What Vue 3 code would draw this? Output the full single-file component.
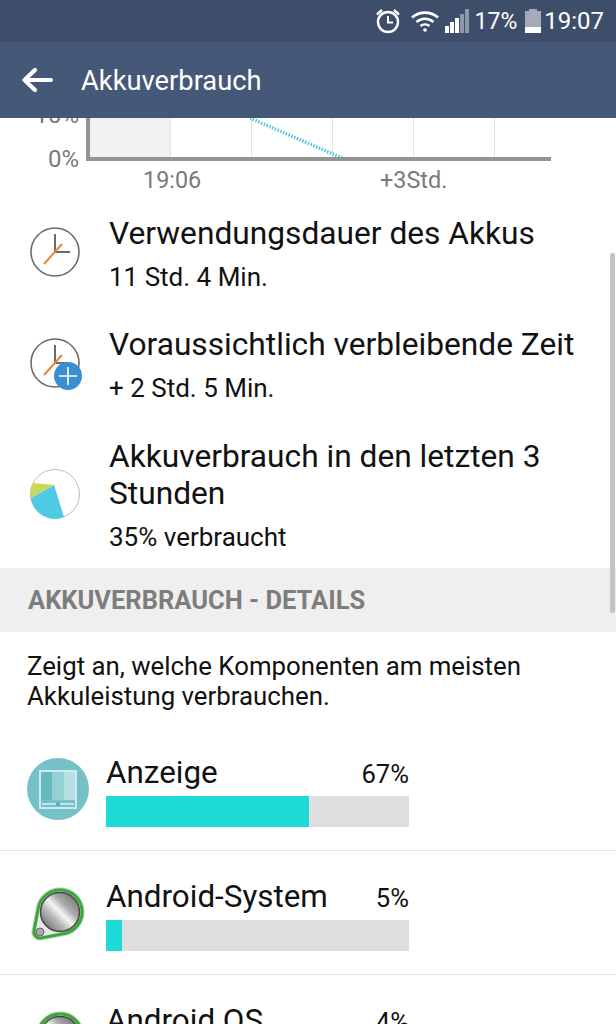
<template>
  <div class="phone">
    <div class="status">
      <svg class="ic-alarm" width="28" height="28" viewBox="0 0 28 28" fill="none" stroke="#fff">
        <circle cx="14" cy="15" r="10" stroke-width="2.4" />
        <path d="M14 9v6.500h5" stroke-width="2" />
        <path d="M3 7.500 8 3M25 7.500 20 3" stroke-width="2.400" />
      </svg>
      <svg class="ic-wifi" width="30" height="24" viewBox="0 0 30 24" fill="none" stroke="#fff" stroke-width="2.6">
        <path d="M2 8.500c7.500-6.500 18.500-6.500 26 0" />
        <path d="M6.500 13c5-4.300 12-4.300 17 0" />
        <path d="M10.500 17c2.600-2 6.400-2 9 0" />
        <circle cx="15" cy="21" r="1.800" fill="#fff" stroke="none" />
      </svg>
      <div class="signal">
        <i v-for="b in signal" :key="b.h" :class="{ off: b.off }" :style="{ height: b.h + 'px' }"></i>
      </div>
      <span class="pct">17%</span>
      <div class="batt"><div class="batt-level"></div></div>
      <span class="clock">19:07</span>
    </div>

    <div class="appbar">
      <svg width="34" height="30" viewBox="0 0 34 30" fill="none" stroke="#fff" stroke-width="4.200" stroke-linecap="round" stroke-linejoin="round">
        <path d="M31 15H5M15 5 4.500 15 15 25" />
      </svg>
      <span class="title">Akkuverbrauch</span>
    </div>

    <div class="chart-area">
      <span class="y top">10%</span>
      <span class="y zero">0%</span>
      <div class="plot">
        <div class="cell now"></div>
        <div v-for="n in 5" :key="n" class="cell"></div>
        <svg class="dots" width="110" height="42" viewBox="0 0 110 42">
          <path d="M0 0 92 40" stroke="#52c6da" stroke-width="3.500" stroke-dasharray="1.500 1.500" />
        </svg>
      </div>
      <div class="xlabels">
        <span>19:06</span>
        <span>+3Std.</span>
      </div>
    </div>

    <div class="info">
      <svg class="info-icon" width="54" height="54" viewBox="0 0 54 54">
        <circle cx="27" cy="27" r="24" fill="#fff" stroke="#6b6b6b" stroke-width="1.600" />
        <path d="M27 9v18h15" fill="none" stroke="#6a6a6a" stroke-width="2" />
        <path d="M16 39 34 19" fill="none" stroke="#e0883f" stroke-width="2" />
      </svg>
      <div class="info-text">
        <div class="info-title">Verwendungsdauer des Akkus</div>
        <div class="info-sub">11 Std. 4 Min.</div>
      </div>
    </div>
    <div class="info">
      <svg class="info-icon" width="54" height="54" viewBox="0 0 54 54">
        <circle cx="27" cy="27" r="24" fill="#fff" stroke="#6b6b6b" stroke-width="1.600" />
        <path d="M27 9v18h15" fill="none" stroke="#6a6a6a" stroke-width="2" />
        <path d="M16 39 34 19" fill="none" stroke="#e0883f" stroke-width="2" />
        <circle cx="40" cy="40" r="14" fill="#3a8fd3" />
        <path d="M40 31v18M31 40h18" stroke="#fff" stroke-width="1.600" />
      </svg>
      <div class="info-text">
        <div class="info-title">Voraussichtlich verbleibende Zeit</div>
        <div class="info-sub">+ 2 Std. 5 Min.</div>
      </div>
    </div>
    <div class="info info-last">
      <svg class="info-icon" width="54" height="54" viewBox="0 0 54 54">
        <circle cx="27" cy="27" r="24.500" fill="#fff" stroke="#bdbdbd" stroke-width="1" />
        <path d="M26 18 36 50A24.500 24.500 0 0 1 2.700 31Z" fill="#4fcbe6" />
        <path d="M26 18 2.700 31A24.500 24.500 0 0 1 5 16Z" fill="#c9d85a" />
      </svg>
      <div class="info-text">
        <div class="info-title">Akkuverbrauch in den letzten 3 Stunden</div>
        <div class="info-sub">35% verbraucht</div>
      </div>
    </div>

    <div class="section">AKKUVERBRAUCH - DETAILS</div>
    <p class="desc">Zeigt an, welche Komponenten am meisten Akkuleistung verbrauchen.</p>

    <div v-for="row in rows" :key="row.name" class="row">
      <svg v-if="row.kind === 'screen'" class="row-icon" width="62" height="62" viewBox="0 0 62 62">
        <circle cx="31" cy="31" r="31" fill="#74c2c8" />
        <rect x="13" y="13" width="36" height="37" fill="none" stroke="#d9f0f0" stroke-width="1.800" />
        <rect x="14" y="14" width="11" height="28" fill="#67b9c0" />
        <rect x="25" y="14" width="12" height="28" fill="#95d0d4" />
        <rect x="37" y="14" width="11" height="28" fill="#b6e0e2" />
        <path d="M15 46h32" stroke="#e4f5f5" stroke-width="1.400" />
        <circle cx="31" cy="46" r="2" fill="#5aa7ae" />
      </svg>
      <svg v-else class="row-icon" width="62" height="62" viewBox="0 0 62 62">
        <defs>
          <linearGradient :id="'metal' + row.fill" x1="0.1" y1="0.9" x2="0.9" y2="0.1">
            <stop offset="0" stop-color="#6f6f6f" />
            <stop offset="0.3" stop-color="#b5b5b5" />
            <stop offset="0.5" stop-color="#f4f4f4" />
            <stop offset="0.7" stop-color="#a8a8a8" />
            <stop offset="1" stop-color="#777" />
          </linearGradient>
        </defs>
        <path d="M11.400 26A22 22 0 1 1 37 51.600L14.100 55.900A6 6 0 0 1 7.100 48.900Z" fill="#e8e8e8" stroke="#2e6b2e" stroke-opacity="0.35" stroke-width="5" />
        <path d="M11.400 26A22 22 0 1 1 37 51.600L14.100 55.900A6 6 0 0 1 7.100 48.900Z" fill="#e8e8e8" stroke="#39a935" stroke-width="3" />
        <circle cx="33" cy="30" r="19.500" :fill="'url(#metal' + row.fill + ')'" stroke="#444" stroke-width="1.500" />
        <circle cx="13" cy="50" r="4" fill="#a9a9a9" stroke="#666" stroke-width="1" />
      </svg>
      <div class="row-main">
        <div class="row-head">
          <span class="row-name">{{ row.name }}</span>
          <span class="row-pct">{{ row.pct }}%</span>
        </div>
        <div class="bar">
          <div class="bar-fill" :style="{ width: row.fill + 'px' }"></div>
        </div>
      </div>
    </div>

    <div class="scrollbar"></div>
  </div>
</template>

<script setup>
const signal = [
  { h: 7 },
  { h: 11 },
  { h: 15 },
  { h: 19, off: true },
  { h: 24, off: true }
]

const rows = [
  { name: 'Anzeige', pct: 67, fill: 203, kind: 'screen' },
  { name: 'Android-System', pct: 5, fill: 16, kind: 'android' },
  { name: 'Android OS', pct: 4, fill: 12, kind: 'android' }
]
</script>

<style>
body {
  margin: 0;
  overflow: hidden;
}
</style>

<style scoped>
.phone {
  position: relative;
  width: 616px;
  height: 1024px;
  overflow: hidden;
  background: #fff;
  font-family: Roboto, "Liberation Sans", sans-serif;
  color: #111;
}

.status {
  position: relative;
  z-index: 1;
  height: 42px;
  background: #3e4e6a;
  display: flex;
  align-items: center;
  justify-content: flex-end;
  padding-right: 12px;
  box-sizing: border-box;
  color: #fff;
}

.ic-alarm {
  margin-right: 8px;
}

.ic-wifi {
  margin-right: 5px;
}

.signal {
  display: flex;
  align-items: flex-end;
  gap: 1px;
  height: 24px;
  margin-right: 6px;
}

.signal i {
  width: 4px;
  background: #fff;
}

.signal i.off {
  background: #8d97a9;
}

.pct {
  font-size: 23px;
  margin-right: 8px;
}

.batt {
  position: relative;
  width: 16px;
  height: 22px;
  margin-top: 2px;
  background: #a5abb6;
  margin-right: 3px;
  display: flex;
  align-items: flex-end;
}

.batt::before {
  content: "";
  position: absolute;
  top: -2px;
  left: 4px;
  width: 8px;
  height: 2px;
  background: #a5abb6;
}

.batt-level {
  width: 100%;
  height: 6px;
  background: #fff;
}

.clock {
  font-size: 24px;
}

.appbar {
  position: relative;
  z-index: 1;
  height: 76px;
  background: #465877;
  display: flex;
  align-items: center;
  padding-left: 20px;
  gap: 27px;
  color: #fff;
}

.title {
  font-size: 27.3px;
  padding-top: 2px;
}

.chart-area {
  position: relative;
  height: 79px;
  color: #7a7a7a;
}

.y {
  position: absolute;
  right: 537px;
  font-size: 24px;
}

.y.top {
  top: -17px;
}

.y.zero {
  top: 27px;
}

.plot {
  position: absolute;
  left: 86px;
  top: 0;
  width: 465px;
  height: 43px;
  box-sizing: border-box;
  border-left: 4px solid #939393;
  border-bottom: 4px solid #939393;
  display: flex;
  overflow: hidden;
}

.cell {
  flex: none;
  width: 81px;
  box-sizing: border-box;
  border-right: 1px solid #e2e2e2;
}

.cell.now {
  background: #f1f1f1;
}

.dots {
  position: absolute;
  left: 160px;
  top: 0;
}

.xlabels {
  position: absolute;
  top: 48px;
  left: 0;
  width: 100%;
  font-size: 23.4px;
}

.xlabels span {
  position: absolute;
  left: 143px;
}

.xlabels span + span {
  left: 380px;
}

.info {
  display: flex;
  align-items: center;
  padding: 18px 0 16px 28px;
}

.info-last {
  padding-top: 19px;
}

.info-icon {
  flex: none;
  overflow: visible;
  margin-top: -3px;
}

.info-text {
  margin-left: 27px;
  width: 480px;
}

.info-title {
  font-size: 31.7px;
  line-height: 37px;
}

.info-sub {
  font-size: 26px;
  line-height: 30px;
  margin-top: 10px;
}

.section {
  height: 64px;
  line-height: 65px;
  padding-left: 28px;
  background: #efefef;
  color: #7d7d7d;
  font-size: 25.5px;
  font-weight: 700;
}

.desc {
  margin: 0;
  padding: 19px 60px 0 27px;
  height: 95px;
  box-sizing: border-box;
  font-size: 25.8px;
  line-height: 30px;
}

.row {
  display: flex;
  align-items: center;
  height: 124px;
  box-sizing: border-box;
  padding: 6px 0 0 27px;
  border-bottom: 1px solid #e4e4e4;
}

.row-icon {
  flex: none;
  margin-bottom: 6px;
}

.row-main {
  margin-left: 17px;
  width: 303px;
}

.row-head {
  display: flex;
  justify-content: space-between;
  align-items: baseline;
  height: 40px;
}

.row-name {
  font-size: 31.4px;
  line-height: 34px;
}

.row-pct {
  font-size: 25.6px;
}

.bar {
  height: 31px;
  background: #dedede;
}

.bar-fill {
  height: 100%;
  background: #1ddad6;
}

.scrollbar {
  position: absolute;
  right: 1px;
  top: 253px;
  width: 5px;
  height: 360px;
  border-radius: 2px;
  background: #c4c4c4;
}
</style>
